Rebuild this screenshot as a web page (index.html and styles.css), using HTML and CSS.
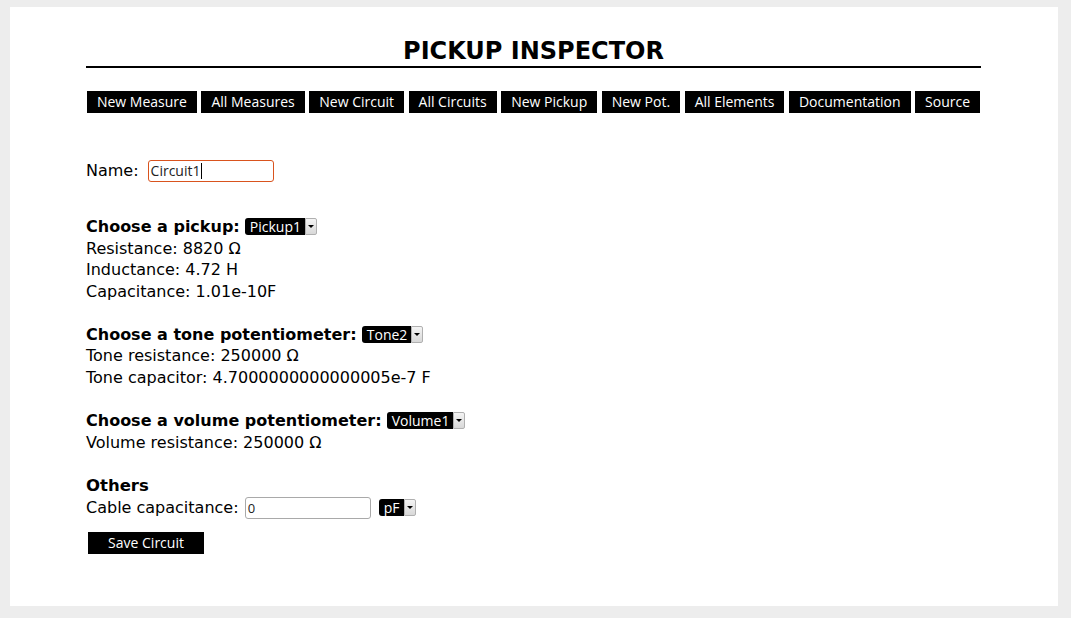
FILE: index.html
```html
<!DOCTYPE html>
<html>
<head>
<meta charset="utf-8">
<link rel="stylesheet" href="styles.css">
</head>
<body>
<div class="page">
  <h1 class="title">PICKUP INSPECTOR</h1>
  <nav class="nav">
    <a class="btn">New Measure</a>
    <a class="btn">All Measures</a>
    <a class="btn">New Circuit</a>
    <a class="btn">All Circuits</a>
    <a class="btn">New Pickup</a>
    <a class="btn">New Pot.</a>
    <a class="btn">All Elements</a>
    <a class="btn">Documentation</a>
    <a class="btn">Source</a>
  </nav>
  <div class="form">
    <div class="row name-row">
      <span>Name:</span>
      <span class="input focused">Circuit1<span class="caret"></span></span>
    </div>

    <div class="section first">
      <div class="row"><b>Choose a pickup:</b> <span class="select"><span class="sel-val">Pickup1</span><span class="sel-arrow"></span></span></div>
      <div class="row">Resistance: 8820 Ω</div>
      <div class="row">Inductance: 4.72 H</div>
      <div class="row">Capacitance: 1.01e-10F</div>
    </div>

    <div class="section">
      <div class="row"><b>Choose a tone potentiometer:</b> <span class="select"><span class="sel-val">Tone2</span><span class="sel-arrow"></span></span></div>
      <div class="row">Tone resistance: 250000 Ω</div>
      <div class="row">Tone capacitor: 4.7000000000000005e-7 F</div>
    </div>

    <div class="section">
      <div class="row"><b>Choose a volume potentiometer:</b> <span class="select"><span class="sel-val">Volume1</span><span class="sel-arrow"></span></span></div>
      <div class="row">Volume resistance: 250000 Ω</div>
    </div>

    <div class="section others">
      <div class="row"><b class="big">Others</b></div>
      <div class="row">Cable capacitance: <span class="input cable">0</span> <span class="select unit"><span class="sel-val">pF</span><span class="sel-arrow"></span></span></div>
    </div>

    <a class="btn save">Save Circuit</a>
  </div>
</div>
</body>
</html>
```
FILE: styles.css
```css
html, body {
  margin: 0;
  padding: 0;
  background: #ededed;
}
body {
  padding: 7px 13px 12px 10px;
}
.page {
  background: #fff;
  height: 599px;
  box-sizing: border-box;
  padding: 0 77px 0 76px;
  font-family: "DejaVu Sans", Verdana, sans-serif;
  font-size: 16px;
  color: #000;
}
.title {
  margin: 0;
  padding-top: 30px;
  font-family: "DejaVu Sans", sans-serif;
  font-weight: bold;
  font-size: 24px;
  line-height: 28px;
  text-align: center;
  border-bottom: 2px solid #000;
  padding-bottom: 1px;
}
.nav {
  display: flex;
  justify-content: center;
  gap: 4.5px;
  margin-top: 23px;
}
.btn {
  display: inline-block;
  background: #000;
  color: #fff;
  font-family: "Open Sans", sans-serif;
  font-size: 14px;
  line-height: 22px;
  height: 22px;
  padding: 0 10px;
}
.form {
  margin-top: 46px;
}
.row {
  line-height: 21.7px;
  height: 21.7px;
  white-space: nowrap;
}
.name-row {
  display: flex;
  align-items: center;
  gap: 9px;
  height: 24px;
  margin-top: 1px;
}
.input {
  display: inline-block;
  box-sizing: border-box;
  border: 1px solid #a9a9a9;
  border-radius: 3px;
  font-family: "Open Sans", sans-serif;
  font-size: 14px;
  height: 22px;
  line-height: 20px;
  padding: 0 2px;
  vertical-align: middle;
  color: #222;
}
.input.focused {
  width: 126px;
  border-color: #d9531e;
}
.caret {
  display: inline-block;
  width: 1px;
  height: 16px;
  background: #000;
  vertical-align: -3px;
}
.input.cable {
  width: 126px;
  margin-left: 1px;
  margin-right: 3px;
  font-size: 13px;
}
.section {
  margin-top: 21px;
}
.section.first {
  margin-top: 33px;
}
.section.others {
  margin-top: 22px;
}
b.big {
  font-size: 16.5px;
}
.select {
  display: inline-flex;
  vertical-align: 0;
  height: 17px;
}
.sel-val {
  background: #000;
  color: #fff;
  font-family: "Open Sans", sans-serif;
  font-size: 14px;
  line-height: 17px;
  padding: 0 4px 0 5px;
  border-radius: 3px 0 0 3px;
}
.sel-arrow {
  position: relative;
  width: 12px;
  box-sizing: border-box;
  background: linear-gradient(#f4f4f4, #d8d8d8);
  border: 1px solid #b0b0b0;
  border-radius: 0 2px 2px 0;
}
.sel-arrow::after {
  content: "";
  position: absolute;
  left: 2px;
  top: 6px;
  border-left: 3px solid transparent;
  border-right: 3px solid transparent;
  border-top: 3px solid #000;
}
.save {
  margin-top: 13px;
  margin-left: 2px;
  width: 116px;
  box-sizing: border-box;
  text-align: center;
}
```
